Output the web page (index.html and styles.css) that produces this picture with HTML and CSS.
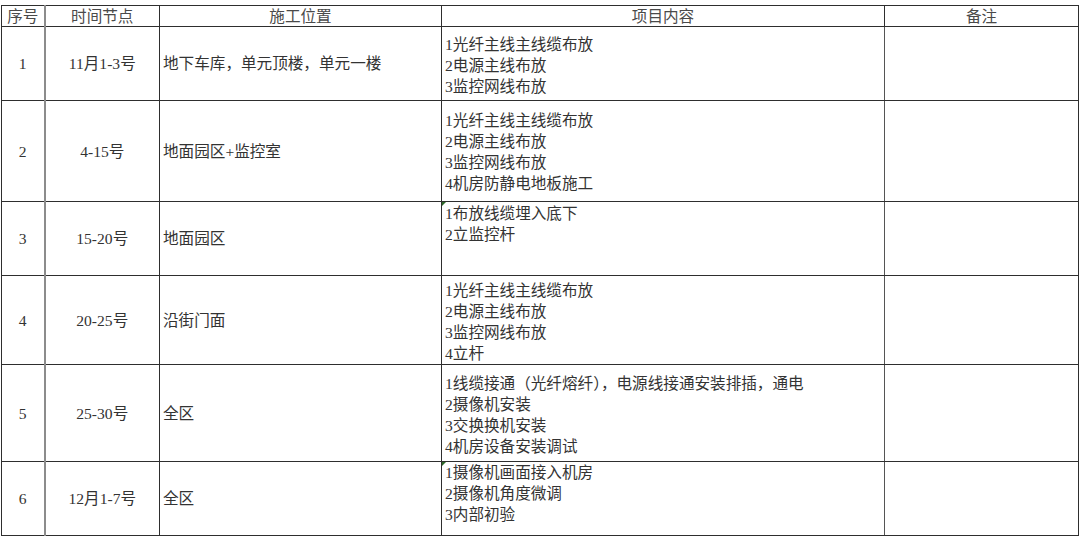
FILE: index.html
```html
<!DOCTYPE html>
<html lang="zh-CN">
<head>
<meta charset="utf-8">
<title>施工进度表</title>
<link rel="stylesheet" href="styles.css">
</head>
<body>
<table class="sheet">
  <colgroup>
    <col class="c-no">
    <col class="c-time">
    <col class="c-place">
    <col class="c-items">
    <col class="c-note">
  </colgroup>
  <thead>
    <tr class="head">
      <th class="no">序号</th>
      <th>时间节点</th>
      <th>施工位置</th>
      <th>项目内容</th>
      <th>备注</th>
    </tr>
  </thead>
  <tbody>
    <tr class="r1">
      <td class="no">1</td>
      <td class="time">11月1-3号</td>
      <td class="place">地下车库，单元顶楼，单元一楼</td>
      <td class="items p1">1光纤主线主线缆布放<br>2电源主线布放<br>3监控网线布放</td>
      <td></td>
    </tr>
    <tr class="r2">
      <td class="no">2</td>
      <td class="time">4-15号</td>
      <td class="place">地面园区+监控室</td>
      <td class="items p2">1光纤主线主线缆布放<br>2电源主线布放<br>3监控网线布放<br>4机房防静电地板施工</td>
      <td></td>
    </tr>
    <tr class="r3">
      <td class="no">3</td>
      <td class="time">15-20号</td>
      <td class="place">地面园区</td>
      <td class="items p3 mark">1布放线缆埋入底下<br>2立监控杆</td>
      <td></td>
    </tr>
    <tr class="r4">
      <td class="no">4</td>
      <td class="time">20-25号</td>
      <td class="place">沿街门面</td>
      <td class="items p4">1光纤主线主线缆布放<br>2电源主线布放<br>3监控网线布放<br>4立杆</td>
      <td></td>
    </tr>
    <tr class="r5">
      <td class="no">5</td>
      <td class="time">25-30号</td>
      <td class="place">全区</td>
      <td class="items p5">1线缆接通（光纤熔纤），电源线接通安装排插，通电<br>2摄像机安装<br>3交换换机安装<br>4机房设备安装调试</td>
      <td></td>
    </tr>
    <tr class="r6">
      <td class="no">6</td>
      <td class="time">12月1-7号</td>
      <td class="place">全区</td>
      <td class="items p6 mark">1摄像机画面接入机房<br>2摄像机角度微调<br>3内部初验</td>
      <td></td>
    </tr>
  </tbody>
</table>
</body>
</html>
```

FILE: styles.css
```css
html, body {
  margin: 0;
  padding: 0;
  background: #ffffff;
}

body {
  padding: 5px 0 0 1px;
  font-family: "Liberation Serif", "Noto Sans CJK SC", serif;
  font-size: 15.6px;
  color: #333333;
}

.sheet {
  border-collapse: collapse;
  table-layout: fixed;
  width: 1078px;
}

.c-no { width: 43px; }
.c-time { width: 115px; }
.c-place { width: 282px; }
.c-items { width: 443px; }
.c-note { width: 194px; }

.sheet th,
.sheet td {
  border: 1px solid #2e2e2e;
  padding: 0;
  line-height: 21px;
  overflow: hidden;
  white-space: nowrap;
}

.sheet th {
  font-weight: normal;
  color: #4a4a4a;
  text-align: center;
  vertical-align: middle;
  line-height: 19px;
}

.sheet .no {
  border-right: 2px solid #8c8c8c;
  text-align: center;
}

.head { height: 21px; }
.r1 { height: 74px; }
.r2 { height: 101px; }
.r3 { height: 74px; }
.r4 { height: 89px; }
.r5 { height: 97px; }
.r6 { height: 74px; }

.sheet td {
  vertical-align: middle;
}

.sheet td.time {
  text-align: center;
}

.sheet td.place {
  padding-left: 3px;
}

.sheet td.items {
  vertical-align: top;
  padding-left: 3px;
  border-right-color: #555555;
}

.sheet td.p1 { padding-top: 7px; }
.sheet td.p2 { padding-top: 9px; }
.sheet td.p3 { padding-top: 1px; }
.sheet td.p4 { padding-top: 4px; }
.sheet td.p5 { padding-top: 8px; }
.sheet td.p6 { padding-top: 0; }

.sheet td.mark {
  position: relative;
}

.sheet td.mark::before {
  content: "";
  position: absolute;
  left: 0;
  top: 0;
  width: 0;
  height: 0;
  border-top: 4px solid #2f6a2a;
  border-right: 4px solid transparent;
}
```
